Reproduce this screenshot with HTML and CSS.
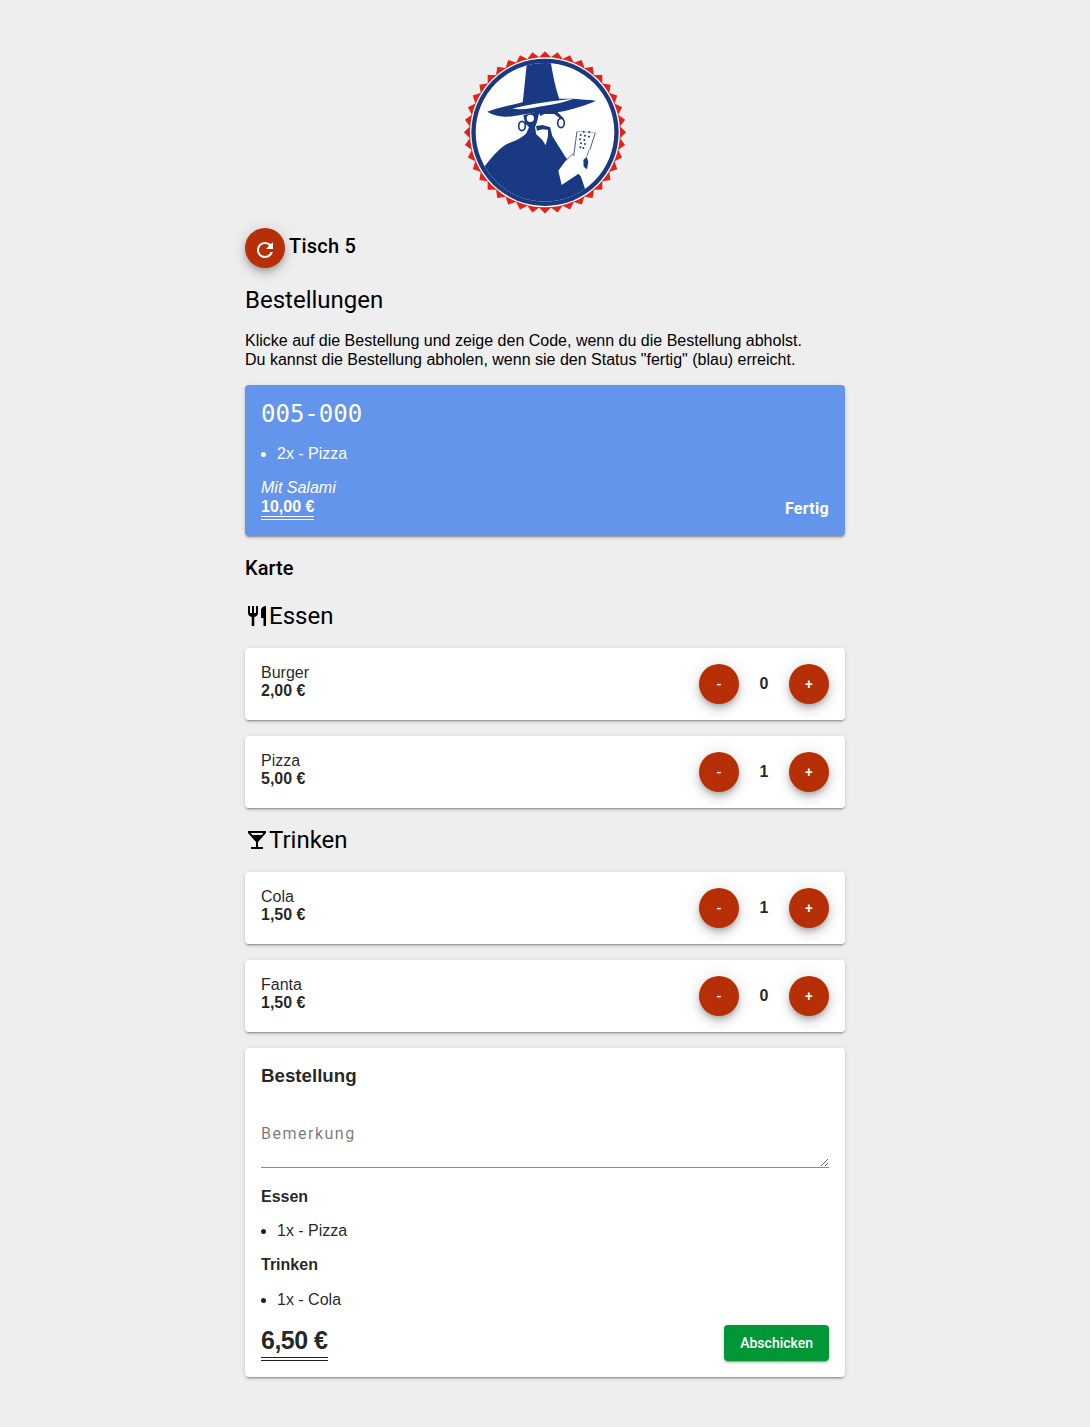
FILE: index.html
```html
<!DOCTYPE html>
<html lang="de">
<head>
<meta charset="utf-8">
<title>Tisch 5</title>
<link rel="stylesheet" href="styles.css">
</head>
<body>
<main class="page">
  <svg class="logo" viewBox="0 0 540 540" width="180" height="180" aria-label="Logo">
    <defs><clipPath id="inner"><circle cx="270" cy="277" r="208"/></clipPath></defs>
    <g class="red" transform="translate(270 277)">
      <rect x="-172" y="-172" width="344" height="344"/>
      <rect x="-172" y="-172" width="344" height="344" transform="rotate(9)"/>
      <rect x="-172" y="-172" width="344" height="344" transform="rotate(18)"/>
      <rect x="-172" y="-172" width="344" height="344" transform="rotate(27)"/>
      <rect x="-172" y="-172" width="344" height="344" transform="rotate(36)"/>
      <rect x="-172" y="-172" width="344" height="344" transform="rotate(45)"/>
      <rect x="-172" y="-172" width="344" height="344" transform="rotate(54)"/>
      <rect x="-172" y="-172" width="344" height="344" transform="rotate(63)"/>
      <rect x="-172" y="-172" width="344" height="344" transform="rotate(72)"/>
      <rect x="-172" y="-172" width="344" height="344" transform="rotate(81)"/>
    </g>
    <circle cx="270" cy="277" r="225" fill="#fff"/>
    <circle cx="270" cy="277" r="221" fill="#193a82"/>
    <circle cx="270" cy="277" r="208" fill="#fff"/>
    <g clip-path="url(#inner)" fill="#193a82">
      <path d="M88 380C115 345 140 316 165 308C190 300 205 288 215 280L240 280L252 290L262 300L272 316L279 288L292 288L312 320L332 352L378 410L390 446L392 520L60 520Z"/>
      <path d="M215 74C240 68 265 66 287 62C292 100 302 145 314 180L203 188C208 145 211 110 215 74Z"/>
      <path d="M97 215C125 204 165 196 205 186L312 176L355 176C378 178 400 179 423 182C395 195 350 210 305 217C285 220 265 216 245 216C210 222 175 231 150 230C130 229 110 224 97 215Z"/>
      <path d="M172 206C220 192 300 182 356 176C330 186 300 192 270 197C240 202 205 211 172 206Z" fill="#fff"/>
      <path d="M205 226L254 212L246 246L240 262L244 284L212 284L222 262L210 250Z"/>
      <path d="M250 214L305 214L327 236L318 238L298 222L268 222L256 228Z"/>
      <path d="M243 258L262 255L286 262L283 270L262 268L246 272Z"/>
      <path d="M279 268L286 264L292 288L279 296Z"/>
      <circle cx="226" cy="235" r="11" fill="#fff"/>
      <ellipse cx="201" cy="258" rx="10" ry="14" fill="#fff" stroke="#193a82" stroke-width="5"/>
      <ellipse cx="318" cy="249" rx="10" ry="14" fill="#fff" stroke="#193a82" stroke-width="5"/>
      <path d="M320 435L310 392L332 362L355 340L360 350L403 328L385 358L395 385L380 395L365 405Z" fill="#fff"/>
      <path d="M385 360L395 350L400 366L396 388L386 380Z"/>
      <path d="M355 340L332 362M403 328L395 350" fill="none" stroke="#193a82" stroke-width="2"/>
      <path d="M366 274L356 348M421 278L405 328" fill="none" stroke="#193a82" stroke-width="2.5"/>
      <path d="M366 274L421 278" fill="none" stroke="#193a82" stroke-width="1"/>
      <circle cx="386" cy="275" r="3"/><circle cx="403" cy="276" r="3"/>
      <circle cx="377" cy="285" r="3"/><circle cx="390" cy="287" r="3"/><circle cx="402" cy="290" r="3"/>
      <circle cx="375" cy="298" r="3"/><circle cx="388" cy="300" r="3"/><circle cx="378" cy="310" r="3"/>
      <circle cx="390" cy="312" r="3"/><circle cx="376" cy="322" r="3"/><circle cx="385" cy="324" r="3"/>
    </g>
  </svg>

  <div class="table-row">
    <button class="round refresh" type="button" aria-label="Aktualisieren">
      <svg class="icon" viewBox="0 0 24 24"><path d="M17.65 6.35C16.2 4.9 14.35 4 12 4c-4.42 0-7.99 3.58-7.99 8s3.57 8 7.99 8c3.73 0 6.84-2.55 7.73-6h-2.08c-.82 2.33-3.04 4-5.65 4-3.31 0-6-2.69-6-6s2.69-6 6-6c1.66 0 3.14.69 4.22 1.78L13 11h7V4l-2.35 2.35z"/></svg>
    </button>
    <h1 class="table-title">Tisch 5</h1>
  </div>

  <h2 class="heading">Bestellungen</h2>
  <p class="intro">Klicke auf die Bestellung und zeige den Code, wenn du die Bestellung abholst.<br>Du kannst die Bestellung abholen, wenn sie den Status "fertig" (blau) erreicht.</p>

  <section class="order-card">
    <div class="code">005-000</div>
    <ul class="list order-list"><li>2x - Pizza</li></ul>
    <div class="order-foot">
      <div>
        <div class="note">Mit Salami</div>
        <div class="order-price"><span class="double">10,00 €</span></div>
      </div>
      <div class="status">Fertig</div>
    </div>
  </section>

  <h2 class="menu-title">Karte</h2>

  <h2 class="heading category"><svg class="cat-icon" viewBox="0 0 24 24"><path d="M11 9H9V2H7v7H5V2H3v7c0 2.12 1.66 3.84 3.75 3.97V22h2.5v-9.03C11.34 12.84 13 11.12 13 9V2h-2v7zm5-3v8h2.5v8H21V2c-2.76 0-5 2.24-5 4z"/></svg>Essen</h2>

  <div class="card item">
    <div class="item-text">Burger<b class="item-price">2,00 €</b></div>
    <div class="controls"><button class="round" type="button">-</button><span class="count">0</span><button class="round" type="button">+</button></div>
  </div>
  <div class="card item">
    <div class="item-text">Pizza<b class="item-price">5,00 €</b></div>
    <div class="controls"><button class="round" type="button">-</button><span class="count">1</span><button class="round" type="button">+</button></div>
  </div>

  <h2 class="heading category"><svg class="cat-icon" viewBox="0 0 24 24"><path d="M21 5V3H3v2l8 9v5H6v2h12v-2h-5v-5l8-9zM7.43 7L5.66 5h12.69l-1.78 2H7.43z"/></svg>Trinken</h2>

  <div class="card item">
    <div class="item-text">Cola<b class="item-price">1,50 €</b></div>
    <div class="controls"><button class="round" type="button">-</button><span class="count">1</span><button class="round" type="button">+</button></div>
  </div>
  <div class="card item">
    <div class="item-text">Fanta<b class="item-price">1,50 €</b></div>
    <div class="controls"><button class="round" type="button">-</button><span class="count">0</span><button class="round" type="button">+</button></div>
  </div>

  <section class="card summary">
    <h3 class="summary-title">Bestellung</h3>
    <textarea class="remark" placeholder="Bemerkung"></textarea>
    <div class="group-title first">Essen</div>
    <ul class="list dark"><li>1x - Pizza</li></ul>
    <div class="group-title">Trinken</div>
    <ul class="list dark cola"><li>1x - Cola</li></ul>
    <div class="summary-foot">
      <span class="total double">6,50 €</span>
      <button class="send" type="button">Abschicken</button>
    </div>
  </section>
</main>
</body>
</html>
```
FILE: styles.css
```css
* { box-sizing: border-box; }

html, body { margin: 0; padding: 0; }

body {
  background: #eeeeee;
  color: #000;
  font-family: "Liberation Sans", Arial, sans-serif;
  font-size: 16px;
}

.page {
  width: 600px;
  margin: 0 auto;
  padding: 40px 0 50px;
}

.logo {
  display: block;
  margin: 0 auto;
}

.red { fill: #e2231a; }

.table-row {
  display: flex;
  margin-top: 8px;
}

.round {
  width: 40px;
  height: 40px;
  flex: none;
  display: flex;
  align-items: center;
  justify-content: center;
  padding: 0;
  border: 0;
  border-radius: 50%;
  background: #b72f06;
  color: #fff;
  font-family: Roboto, sans-serif;
  font-size: 14px;
  font-weight: 500;
  box-shadow: 0 3px 5px -1px rgba(0,0,0,.2), 0 6px 10px 0 rgba(0,0,0,.14), 0 1px 18px 0 rgba(0,0,0,.12);
}

.refresh { padding-top: 4px; }

.icon { width: 24px; height: 24px; fill: #fff; }

.table-title {
  margin: 0 0 0 4px;
  font-family: Roboto, sans-serif;
  font-size: 20px;
  font-weight: 500;
  letter-spacing: .25px;
  line-height: 36px;
}

.heading {
  margin: 16px 0 0;
  font-family: Roboto, sans-serif;
  font-size: 24px;
  font-weight: 400;
  line-height: 32px;
}

.intro {
  margin: 15px 0 16px;
  line-height: 19px;
}

.order-card {
  padding: 16px;
  border-radius: 4px;
  background: #6495ed;
  color: #fff;
  box-shadow: 0 3px 1px -2px rgba(0,0,0,.2), 0 2px 2px 0 rgba(0,0,0,.14), 0 1px 5px 0 rgba(0,0,0,.12);
}

.code {
  font-family: "DejaVu Sans Mono", monospace;
  font-size: 24px;
  line-height: 27px;
}

.list {
  margin: 16px 0;
  padding-left: 16px;
  line-height: 19px;
}

.order-list { margin-bottom: 15px; }

.order-foot {
  display: flex;
  justify-content: space-between;
  align-items: flex-end;
}

.note { font-style: italic; line-height: 19px; }

.order-price { font-weight: 700; line-height: 19px; }

.double {
  display: inline-block;
  border-bottom: 4px double currentColor;
}

.status {
  padding-bottom: 2px;
  font-family: Roboto, sans-serif;
  font-weight: 700;
  letter-spacing: .3px;
  line-height: 19px;
}

.menu-title {
  margin: 16px 0 0;
  font-family: Roboto, sans-serif;
  font-size: 20px;
  font-weight: 500;
  line-height: 32px;
}

.category {
  display: flex;
  align-items: center;
  margin-bottom: 16px;
}

.cat-icon { width: 24px; height: 24px; flex: none; }

.card {
  margin-bottom: 16px;
  padding: 16px;
  border-radius: 4px;
  background: #fff;
  color: rgba(0,0,0,.87);
  box-shadow: 0 3px 1px -2px rgba(0,0,0,.2), 0 2px 2px 0 rgba(0,0,0,.14), 0 1px 5px 0 rgba(0,0,0,.12);
}

.item {
  display: flex;
  justify-content: space-between;
  height: 72px;
}

.item-text { line-height: 18px; }

.item-price { display: block; }

.controls {
  display: flex;
  align-items: center;
}

.count {
  width: 50px;
  text-align: center;
  font-weight: 700;
}

.summary { margin-bottom: 0; }

.summary-title {
  margin: 0;
  font-size: 18.72px;
  line-height: 23px;
}

.remark {
  display: block;
  width: 100%;
  height: 66px;
  margin-top: 15px;
  padding: 20px 0 0;
  border: 0;
  border-bottom: 1px solid #8c8c8c;
  border-radius: 0;
  outline: 0;
  background: transparent;
  color: rgba(0,0,0,.87);
  font-family: Roboto, sans-serif;
  font-size: 16px;
  letter-spacing: 1.5px;
  line-height: 24px;
}

.remark::placeholder { color: rgba(0,0,0,.54); opacity: 1; }

.group-title {
  font-weight: 700;
  line-height: 18px;
}

.group-title.first { margin-top: 20px; }

.dark { line-height: 18px; color: rgba(0,0,0,.87); }

.cola { margin: 17px 0 16px; }

.summary-foot {
  display: flex;
  justify-content: space-between;
  align-items: flex-end;
}

.total {
  padding-bottom: 3px;
  font-size: 25px;
  font-weight: 700;
  letter-spacing: -.5px;
  line-height: 27px;
}

.send {
  height: 36px;
  padding: 0 16px;
  border: 0;
  border-radius: 4px;
  background: #009736;
  color: #fff;
  font-family: Roboto, sans-serif;
  font-size: 14px;
  font-weight: 500;
  box-shadow: 0 3px 1px -2px rgba(0,0,0,.2), 0 2px 2px 0 rgba(0,0,0,.14), 0 1px 5px 0 rgba(0,0,0,.12);
}
```
